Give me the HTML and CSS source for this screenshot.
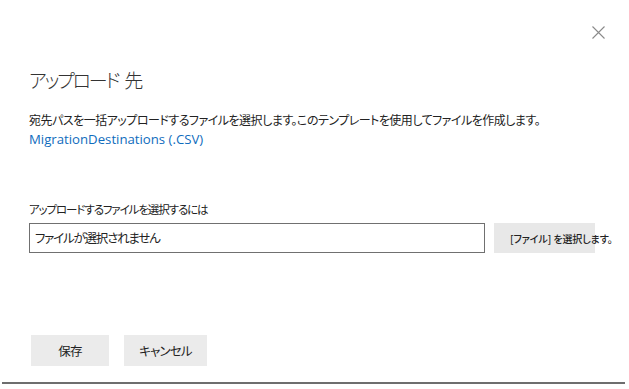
FILE: index.html
```html
<!DOCTYPE html>
<html lang="ja">
<head>
<meta charset="utf-8">
<link rel="stylesheet" href="styles.css">
</head>
<body>
<div class="dialog">
  <div class="close-row">
    <svg class="close" width="13" height="13" viewBox="0 0 13 13"><path d="M0.5 0.5 L12.5 12.5 M12.5 0.5 L0.5 12.5" stroke="#8a8a8a" stroke-width="1.1" fill="none"/></svg>
  </div>
  <h1 class="title">アップロード 先</h1>
  <p class="desc">宛先パスを一括アップロードするファイルを選択します。このテンプレートを使用してファイルを作成します。</p>
  <a class="link" href="#">MigrationDestinations (.CSV)</a>
  <div class="field">
    <div class="label">アップロードするファイルを選択するには</div>
    <div class="file-row">
      <div class="file-input">ファイルが選択されません</div>
      <div class="file-btn"><span class="file-btn-text">[ファイル] を選択します。</span></div>
    </div>
  </div>
  <div class="actions">
    <div class="btn">保存</div>
    <div class="btn btn-cancel">キャンセル</div>
  </div>
  <div class="rule"></div>
</div>
</body>
</html>
```
FILE: styles.css
```css
html, body {
  margin: 0;
  padding: 0;
  background: #ffffff;
}
body {
  font-family: "Noto Sans CJK JP", "Noto Sans", sans-serif;
  color: #333333;
  font-feature-settings: "palt";
}
.dialog {
  width: 629px;
  height: 389px;
  display: flex;
  flex-direction: column;
  box-sizing: border-box;
}
.close-row {
  display: flex;
  justify-content: flex-end;
  padding: 26px 24px 0 0;
  height: 13px;
}
.title {
  margin: 27px 0 0 29px;
  font-size: 19px;
  line-height: 28px;
  font-weight: 300;
  letter-spacing: -2.2px;
  word-spacing: 4px;
  color: #333333;
}
.desc {
  margin: 17px 0 0 29px;
  font-size: 12px;
  line-height: 18px;
  letter-spacing: -0.5px;
  color: #222222;
}
.link {
  margin: 1px 0 0 29px;
  font-family: "Open Sans", "Noto Sans", sans-serif;
  font-size: 13.2px;
  line-height: 18px;
  color: #0f6cbd;
  text-decoration: none;
  align-self: flex-start;
}
.field {
  margin: 52px 0 0 29px;
  display: flex;
  flex-direction: column;
}
.label {
  font-size: 11.5px;
  line-height: 18px;
  letter-spacing: -1.1px;
  color: #222222;
}
.file-row {
  margin-top: 5px;
  display: flex;
  gap: 9px;
}
.file-input {
  width: 456px;
  height: 30px;
  box-sizing: border-box;
  border: 1px solid #707070;
  padding: 0 0 0 5px;
  font-size: 12.5px;
  line-height: 28px;
  letter-spacing: -1.2px;
  color: #222222;
}
.file-btn {
  width: 101px;
  height: 30px;
  background: #e8e8e8;
  display: flex;
  align-items: center;
  white-space: nowrap;
}
.file-btn-text {
  margin-left: 16px;
  font-size: 10px;
  font-weight: 500;
  letter-spacing: -0.1px;
  color: #222222;
}
.actions {
  margin: 82px 0 0 31px;
  display: flex;
  gap: 15px;
}
.btn {
  width: 78px;
  height: 31px;
  background: #ebebeb;
  display: flex;
  align-items: center;
  justify-content: center;
  font-size: 12.5px;
  letter-spacing: -0.8px;
  color: #222222;
}
.btn-cancel {
  width: 83px;
}
.rule {
  margin: 16px 4px 0 2px;
  height: 2px;
  background: #6e6e6e;
}
```
